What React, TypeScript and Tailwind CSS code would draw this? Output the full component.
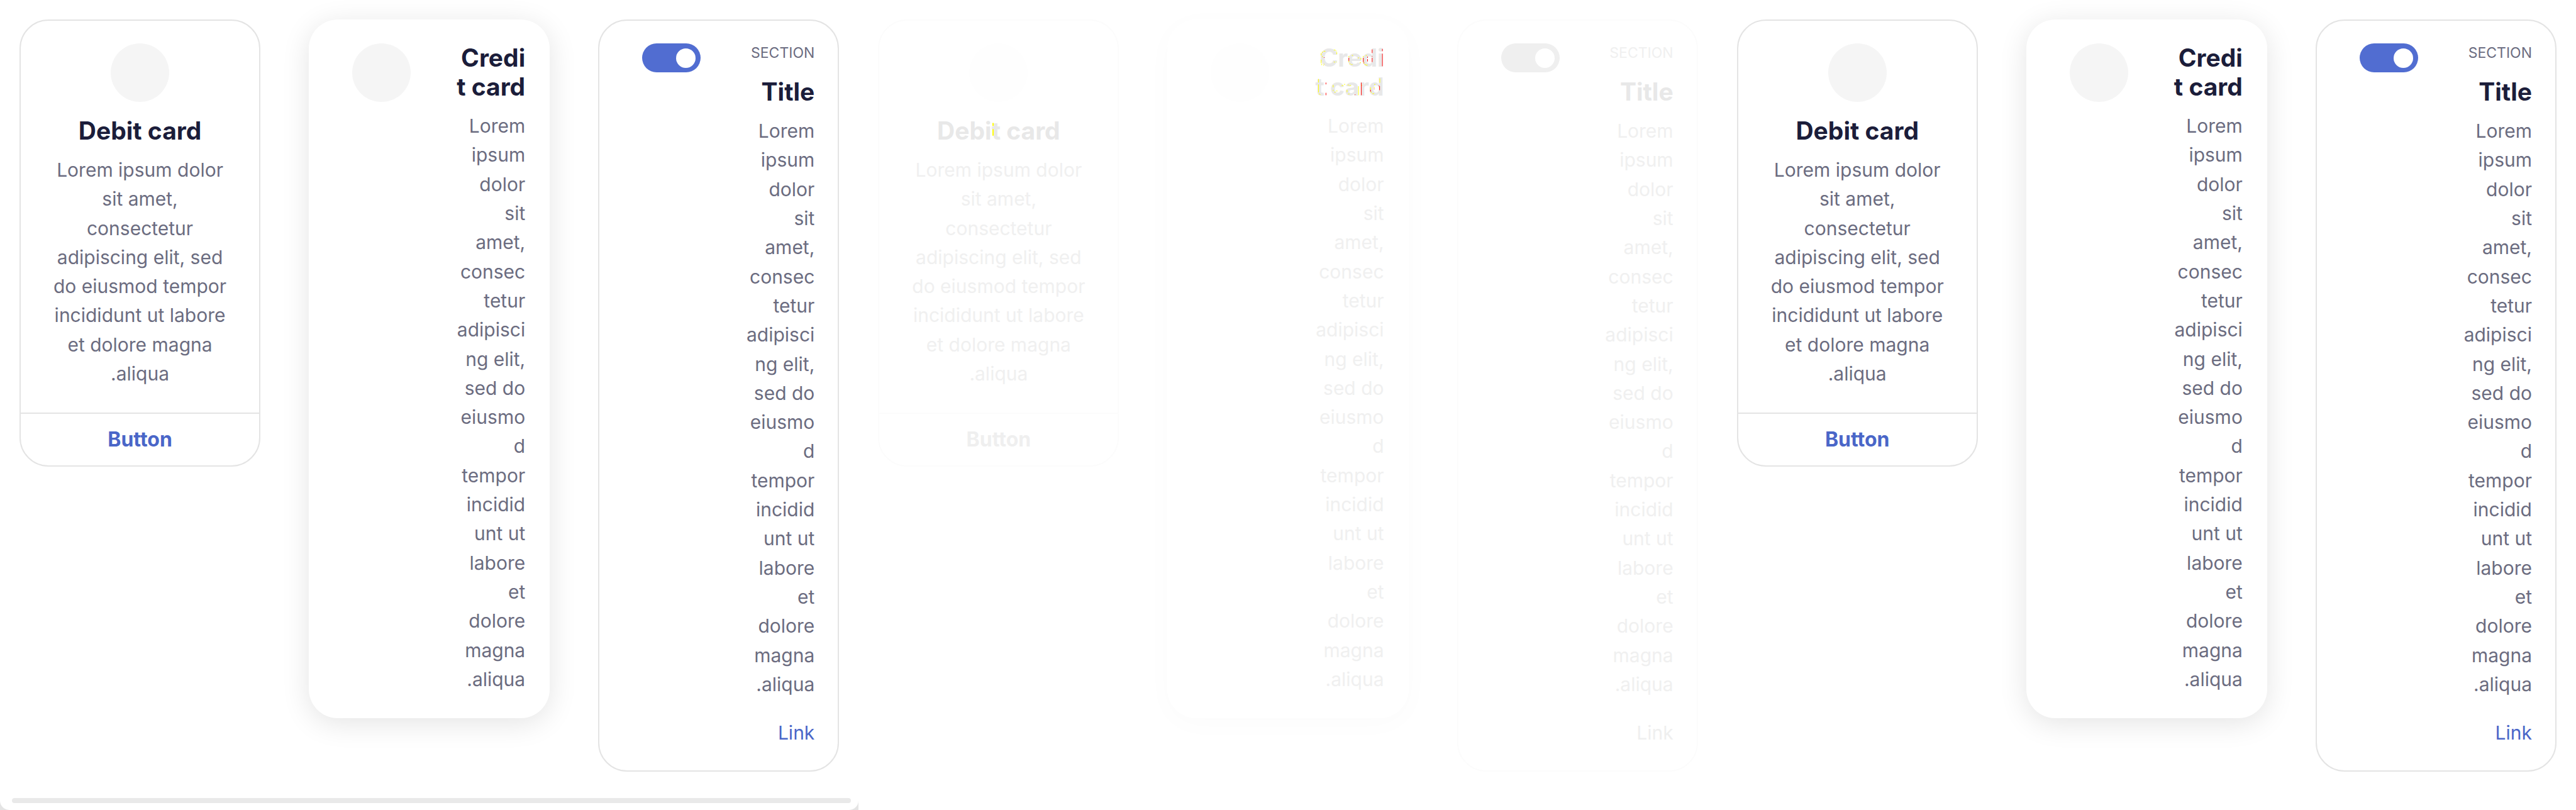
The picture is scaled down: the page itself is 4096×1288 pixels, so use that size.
import React from "react";

type Tone = {
  title: string;
  body: string;
  caption: string;
  accent: string;
  line: string;
  circle: string;
  toggle: string;
  shadow: string;
};

const SOLID: Tone = {
  title: "text-[#1b1d3a]",
  body: "text-[#6b6c80]",
  caption: "text-[#6b6c80]",
  accent: "text-[#4a66c8]",
  line: "border-[#e4e4e4]",
  circle: "bg-[#f5f5f5]",
  toggle: "bg-[#516dd1]",
  shadow: "shadow-[0_8px_46px_rgba(0,0,0,0.11)]",
};

const FADED: Tone = {
  title: "text-[#e8e8e8]",
  body: "text-[#f0f0f0]",
  caption: "text-[#f0f0f0]",
  accent: "text-[#efefef]",
  line: "border-[#fcfcfc]",
  circle: "bg-[#fefefe]",
  toggle: "bg-[#efefef]",
  shadow: "shadow-[0_8px_46px_rgba(0,0,0,0.018)]",
};

const WIDE_LINES = [
  "Lorem ipsum dolor",
  "sit amet,",
  "consectetur",
  "adipiscing elit, sed",
  "do eiusmod tempor",
  "incididunt ut labore",
  "et dolore magna",
  ".aliqua",
];

const NARROW_LINES = [
  "Lorem",
  "ipsum",
  "dolor",
  "sit",
  "amet,",
  "consec",
  "tetur",
  "adipisci",
  "ng elit,",
  "sed do",
  "eiusmo",
  "d",
  "tempor",
  "incidid",
  "unt ut",
  "labore",
  "et",
  "dolore",
  "magna",
  ".aliqua",
];

function Lines({ lines, className }: { lines: string[]; className: string }) {
  return (
    <p className={`flex flex-col justify-between whitespace-nowrap text-[30px] leading-[46px] ${className}`}>
      {lines.map((line) => (
        <span key={line} className="block">
          {line}
        </span>
      ))}
    </p>
  );
}

function DebitCard({ tone, marks }: { tone: Tone; marks?: React.ReactNode }) {
  return (
    <article className={`overflow-hidden rounded-[46px] border-2 bg-white text-center ${tone.line}`}>
      <div className="flex flex-col items-center px-4 pt-9 pb-[39px]">
        <div className={`size-[93px] rounded-full ${tone.circle}`} />
        <h2 className={`relative mt-[23px] text-[39px] leading-[46px] font-bold ${tone.title}`}>
          Debit card
          {marks}
        </h2>
        <Lines lines={WIDE_LINES} className={`mt-4 min-h-[370px] ${tone.body}`} />
      </div>
      <button type="button" className={`block h-[84px] w-full border-t-2 text-[32px] leading-[46px] font-bold ${tone.line} ${tone.accent}`}>
        Button
      </button>
    </article>
  );
}

function CreditCard({ tone, marks }: { tone: Tone; marks?: React.ReactNode }) {
  return (
    <article className={`flex justify-between rounded-[46px] bg-white pt-[38px] pr-[39px] pb-[39px] pl-[69px] ${tone.shadow}`}>
      <div className={`size-[93px] shrink-0 rounded-full ${tone.circle}`} />
      <div className="text-right">
        <h2 className={`relative text-[39px] leading-[46px] font-bold ${tone.title}`}>
          Credi
          <br />
          t card
          {marks}
        </h2>
        <Lines lines={NARROW_LINES} className={`mt-4 min-h-[926px] ${tone.body}`} />
      </div>
    </article>
  );
}

function SectionCard({ tone }: { tone: Tone }) {
  return (
    <article className={`flex justify-between rounded-[46px] border-2 bg-white pt-9 pr-[37px] pb-[37px] pl-[68px] ${tone.line}`}>
      <label className="relative block h-[46px] w-[93px] shrink-0">
        <input
          type="checkbox"
          role="switch"
          defaultChecked
          aria-label="Toggle section"
          className={`peer block h-full w-full appearance-none rounded-full ${tone.toggle}`}
        />
        <span className="pointer-events-none absolute top-2 left-2 size-[31px] rounded-full bg-white peer-checked:right-2 peer-checked:left-auto" />
      </label>
      <div className="flex flex-col text-right">
        <p className={`text-[23px] leading-[31px] ${tone.caption}`}>SECTION</p>
        <h2 className={`mt-[23px] text-[39px] leading-[46px] font-bold ${tone.title}`}>Title</h2>
        <Lines lines={NARROW_LINES} className={`mt-4 min-h-[926px] ${tone.body}`} />
        <a href="#" className={`mt-[31px] text-[30px] leading-[46px] ${tone.accent}`}>
          Link
        </a>
      </div>
    </article>
  );
}

function DebitMarks() {
  return (
    <svg aria-hidden="true" viewBox="0 0 200 48" className="absolute top-0 left-0 h-[46px] w-full" preserveAspectRatio="none">
      <path d="M91 11v5M91 21v11" stroke="#ffff00" strokeWidth="2" />
    </svg>
  );
}

/* Stray one-pixel edges over the faded heading; units are a third of a pixel. */
function CreditMarks() {
  return (
    <svg aria-hidden="true" viewBox="30 36 336 288" className="absolute top-0 right-0 h-[92px] w-[108px]">
      <g fill="none" strokeWidth="3">
        <g stroke="#ffff00">
          <path d="M53 84v12M53 117v18M59 77v6M56 138v6M65 144v3M68 138v3M65 75h9M116 69h8M125 72h3M128 78h3M131 81v9M116 129h6M128 129h3M59 99v6" />
          <path d="M191 99v6M191 123v6M197 135v6M203 141h6M206 96h6M236 108h6M251 108v9M245 132h6M263 99v6M266 129v6M269 141h6M275 144h9M275 96h6" />
          <path d="M40 213v18M40 240v40M44 285v6M47 291h3M113 243v12M113 267v6M119 279h6M128 273h6M155 246h9M167 240h6M185 243h6M194 246h8M182 267v12M188 288h6M239 249v45M256 243v3M299 255v12M302 276v6M308 286h9M317 240h6M345 210v22M317 252v6" />
        </g>
        <g stroke="#ff0000">
          <path d="M68 105v3M191 108v15M263 108v21M266 132v3M284 102v6M284 114v12M307 66v18M307 99v3M307 108v21M358 63v12M358 87v63" />
          <path d="M77 231v9M77 282v12M222 290v3M253 231v63M299 267v9M317 261v3M344 249v20M341 246v3" />
        </g>
      </g>
    </svg>
  );
}

function Panel({ tone, faded, scrollbar }: { tone: Tone; faded?: boolean; scrollbar?: boolean }) {
  return (
    <section className={scrollbar ? "bg-[#e4e4e4]" : "bg-white"}>
      <div className={`flex min-h-screen flex-col bg-white ${scrollbar ? "rounded-b-[15px]" : ""}`}>
        <div className="grid grid-cols-3 items-start gap-[77px] px-[31px] pt-[31px]">
          <DebitCard tone={tone} marks={faded ? <DebitMarks /> : undefined} />
          <CreditCard tone={tone} marks={faded ? <CreditMarks /> : undefined} />
          <SectionCard tone={tone} />
        </div>
        {scrollbar && <div className="mt-auto mr-3 mb-[11px] ml-[19px] h-2 rounded-full bg-[#e9e9e9]" />}
      </div>
    </section>
  );
}

export default function App() {
  return (
    <main className="grid min-h-screen grid-cols-3 bg-white font-['Inter',sans-serif]">
      <Panel tone={SOLID} scrollbar />
      <Panel tone={FADED} faded />
      <Panel tone={SOLID} />
    </main>
  );
}
